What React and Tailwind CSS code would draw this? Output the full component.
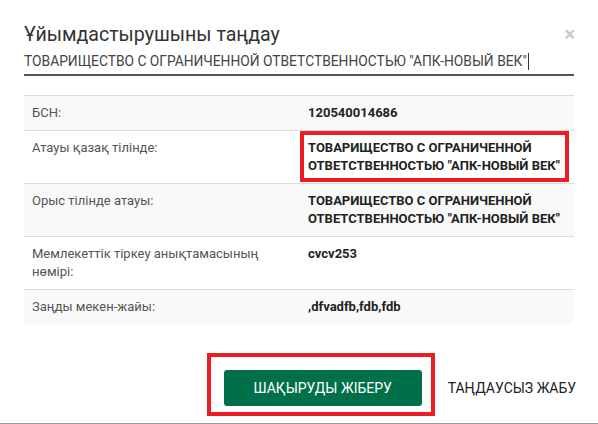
import React from "react";

const rows = [
  { label: "БСН:", value: "120540014686", tall: false },
  {
    label: "Атауы қазақ тілінде:",
    value: 'ТОВАРИЩЕСТВО С ОГРАНИЧЕННОЙ ОТВЕТСТВЕННОСТЬЮ "АПК-НОВЫЙ ВЕК"',
    marked: true,
  },
  {
    label: "Орыс тілінде атауы:",
    value: 'ТОВАРИЩЕСТВО С ОГРАНИЧЕННОЙ ОТВЕТСТВЕННОСТЬЮ "АПК-НОВЫЙ ВЕК"',
  },
  { label: "Мемлекеттік тіркеу анықтамасының нөмірі:", value: "cvcv253" },
  { label: "Заңды мекен-жайы:", value: ",dfvadfb,fdb,fdb" },
];

const App = () => {
  return (
    <div className="w-[598px] h-[424px] bg-white font-['Roboto',sans-serif] text-[#333] border-b border-[#9a9a9a] flex flex-col">
      {/* Header */}
      <div className="relative px-6 pt-[23px]">
        <h2 className="text-[19.6px] leading-[24px] text-[#333]">
          Ұйымдастырушыны таңдау
        </h2>
        <span className="absolute right-[23px] top-[24px] text-[20px] leading-[20px] font-bold text-[#c8c8c8]">
          ×
        </span>
        <div className="mt-[4px] border-b-2 border-[#555] pb-[3px] text-[13.8px] leading-[20px] text-[#444] flex items-center">
          <span>ТОВАРИЩЕСТВО С ОГРАНИЧЕННОЙ ОТВЕТСТВЕННОСТЬЮ "АПК-НОВЫЙ ВЕК"</span>
          <span className="inline-block w-px h-[17px] bg-[#333] ml-[1px]" />
        </div>
      </div>

      {/* Details table */}
      <div className="mx-6 mt-[19px] text-[13px] leading-[18px]">
        {rows.map((row, i) => (
          <div
            key={i}
            className={`flex border-t border-[#dddddd] ${
              i % 2 === 0 ? "bg-[#f9f9f9]" : "bg-white"
            }`}
          >
            <div className="w-[276px] p-2 pr-4 text-[#555]">{row.label}</div>
            <div className="relative flex-1 p-2 font-bold text-[#222]">
              {row.value}
              {row.marked && (
                <span className="absolute left-0 right-[5px] top-0 bottom-[1px] border-4 border-[#ec1c24]" />
              )}
            </div>
          </div>
        ))}
      </div>

      {/* Footer */}
      <div className="mt-auto mb-[17px] flex items-center justify-end pr-[22px] gap-[26px]">
        <div className="relative">
          <button className="w-[198px] h-[36px] rounded-[3px] bg-[#007049] text-white text-[14px]">
            ШАҚЫРУДЫ ЖІБЕРУ
          </button>
          <span className="absolute -left-[17px] -right-[13px] -top-[17px] -bottom-[10px] border-4 border-[#ec1c24]" />
        </div>
        <span className="text-[14px] text-[#222]">ТАҢДАУСЫЗ ЖАБУ</span>
      </div>
    </div>
  );
};

export default App;
